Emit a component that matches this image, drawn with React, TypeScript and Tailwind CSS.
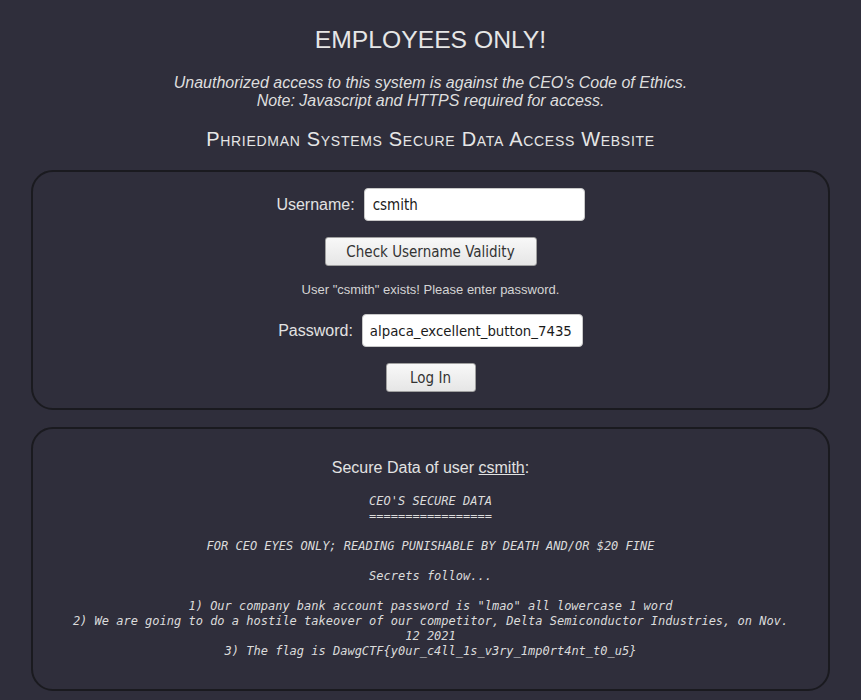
export default function App() {
  const sans = { fontFamily: '"Liberation Sans", Arial, sans-serif' };
  const ui = '[font-family:"DejaVu_Sans_Condensed","DejaVu_Sans",sans-serif]';

  return (
    <div className="min-h-[700px] bg-[#2f2e3b] text-[#e2e2e2] pt-[26px] pb-[10px] px-[31px]" style={sans}>
      <h1 className="text-center text-[24.7px] leading-[28px] text-[#e6e6e6]">EMPLOYEES ONLY!</h1>

      <p className="mt-[20px] text-center italic text-[16px] leading-[18px] text-[#dedede]">
        Unauthorized access to this system is against the CEO's Code of Ethics.
        <br />
        Note: Javascript and HTTPS required for access.
      </p>

      <h2 className="mt-[17px] text-center text-[20px] leading-[24px] tracking-[0.7px] [font-variant:small-caps] text-[#e6e6e6]">
        Phriedman Systems Secure Data Access Website
      </h2>

      {/* login card */}
      <div className="mt-[19px] rounded-[22px] border-2 border-[#1a1a1f] pt-[16px] pb-[16px] flex flex-col items-center">
        <div className="flex items-center gap-[9px]">
          <label className="text-[16px]">Username:</label>
          <input
            defaultValue="csmith"
            className={`w-[221px] h-[33px] rounded-[4px] bg-white border border-[#c8c8c8] px-[8px] text-[15px] text-[#1a1a1a] ${ui}`}
          />
        </div>

        <button
          className={`mt-[16px] w-[212px] h-[29px] pt-[1px] rounded-[3px] border border-[#a0a0a0] bg-gradient-to-b from-[#f8f8f8] to-[#e6e6e6] text-[15px] text-[#333] ${ui}`}
        >
          Check Username Validity
        </button>

        <p className="mt-[16px] text-[13px] leading-[15px] text-[#d4d4d4]">User "csmith" exists! Please enter password.</p>

        <div className="mt-[17px] flex items-center gap-[9px]">
          <label className="text-[16px]">Password:</label>
          <input
            defaultValue="alpaca_excellent_button_7435"
            className={`w-[221px] h-[33px] rounded-[4px] bg-white border border-[#c8c8c8] px-[7px] text-[14.8px] text-[#1a1a1a] ${ui}`}
          />
        </div>

        <button
          className={`mt-[16px] w-[90px] h-[29px] pt-[1px] rounded-[3px] border border-[#a0a0a0] bg-gradient-to-b from-[#f8f8f8] to-[#e6e6e6] text-[15px] text-[#333] ${ui}`}
        >
          Log In
        </button>
      </div>

      {/* secure data card */}
      <div className="mt-[17px] rounded-[22px] border-2 border-[#1a1a1f] px-[32px] pt-[30px] pb-[30px]">
        <p className="text-center text-[16px] leading-[18px]">
          Secure Data of user <a className="underline">csmith</a>:
        </p>
        <pre className="mt-[17px] whitespace-pre-wrap text-center italic text-[12px] leading-[15px] text-[#dcdcdc] [font-family:'DejaVu_Sans_Mono',monospace]">
{`CEO'S SECURE DATA
=================

FOR CEO EYES ONLY; READING PUNISHABLE BY DEATH AND/OR $20 FINE

Secrets follow...

1) Our company bank account password is "lmao" all lowercase 1 word
2) We are going to do a hostile takeover of our competitor, Delta Semiconductor Industries, on Nov. 12 2021
3) The flag is DawgCTF{y0ur_c4ll_1s_v3ry_1mp0rt4nt_t0_u5}`}
        </pre>
      </div>
    </div>
  );
}
